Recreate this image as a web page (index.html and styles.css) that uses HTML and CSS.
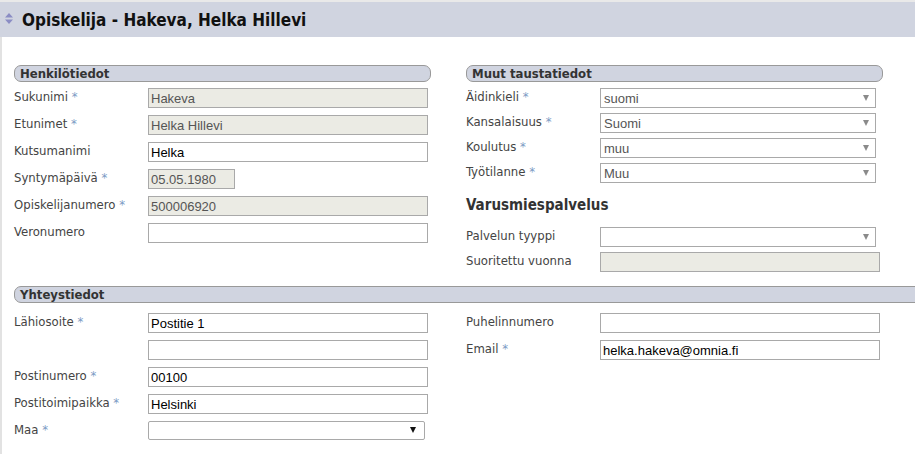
FILE: index.html
```html
<!DOCTYPE html>
<html lang="fi">
<head>
<meta charset="utf-8">
<title>Opiskelija - Hakeva, Helka Hillevi</title>
<link rel="stylesheet" href="styles.css">
</head>
<body>
<div class="titlebar">
  <svg class="sort" width="8" height="11" viewBox="0 0 8 11"><path d="M4 0 L8 4.5 H0 Z M0 6.5 H8 L4 11 Z" fill="#8b8dc4"/></svg>
  <h1>Opiskelija - Hakeva, Helka Hillevi</h1>
</div>
<div class="content">
  <div class="cols">
    <section class="col">
      <div class="sechead">Henkilötiedot</div>
      <div class="form">
        <label class="label">Sukunimi <span class="req">*</span></label>
        <input class="field" value="Hakeva" disabled>
        <label class="label">Etunimet <span class="req">*</span></label>
        <input class="field" value="Helka Hillevi" disabled>
        <label class="label">Kutsumanimi</label>
        <input class="field" value="Helka">
        <label class="label">Syntymäpäivä <span class="req">*</span></label>
        <input class="field short" value="05.05.1980" disabled>
        <label class="label">Opiskelijanumero <span class="req">*</span></label>
        <input class="field" value="500006920" disabled>
        <label class="label">Veronumero</label>
        <input class="field" value="">
      </div>
    </section>
    <section class="col right">
      <div class="sechead">Muut taustatiedot</div>
      <div class="form tight">
        <label class="label">Äidinkieli <span class="req">*</span></label>
        <div class="sel"><select><option>suomi</option></select></div>
        <label class="label">Kansalaisuus <span class="req">*</span></label>
        <div class="sel"><select><option>Suomi</option></select></div>
        <label class="label">Koulutus <span class="req">*</span></label>
        <div class="sel"><select><option>muu</option></select></div>
        <label class="label">Työtilanne <span class="req">*</span></label>
        <div class="sel"><select><option>Muu</option></select></div>
      </div>
      <h2 class="subhead">Varusmiespalvelus</h2>
      <div class="form tight nomargin">
        <label class="label">Palvelun tyyppi</label>
        <div class="sel"><select><option></option></select></div>
        <label class="label">Suoritettu vuonna</label>
        <input class="field" value="" disabled>
      </div>
    </section>
  </div>
  <div class="sechead wide">Yhteystiedot</div>
  <div class="cols bottom">
    <section class="col">
      <div class="form nomargin">
        <label class="label">Lähiosoite <span class="req">*</span></label>
        <input class="field" value="Postitie 1">
        <span class="label"></span>
        <input class="field" value="">
        <label class="label">Postinumero <span class="req">*</span></label>
        <input class="field" value="00100">
        <label class="label">Postitoimipaikka <span class="req">*</span></label>
        <input class="field" value="Helsinki">
        <label class="label">Maa <span class="req">*</span></label>
        <div class="sel native"><select><option></option></select></div>
      </div>
    </section>
    <section class="col right">
      <div class="form nomargin">
        <label class="label">Puhelinnumero</label>
        <input class="field" value="">
        <label class="label">Email <span class="req">*</span></label>
        <input class="field" value="helka.hakeva@omnia.fi">
      </div>
    </section>
  </div>
</div>
</body>
</html>
```

FILE: styles.css
```css
* { box-sizing: border-box; }
html, body { margin: 0; padding: 0; }
body {
  background: #fff;
  font-family: "DejaVu Sans Condensed", "DejaVu Sans", sans-serif;
  font-stretch: condensed;
  font-size: 13px;
  color: #444;
  overflow: hidden;
  border-top: 2px solid #e9e9e9;
}
.titlebar {
  height: 35px;
  background: #d0d4e0;
  display: flex;
  align-items: center;
  padding-left: 5px;
  gap: 9px;
}
.titlebar h1 {
  margin: 0;
  font-size: 17px;
  font-weight: bold;
  color: #111;
  line-height: 20px;
}
.sort { display: block; margin-top: -2px; }
.content {
  border-left: 2px solid #e2e2e2;
  padding: 28px 0 0 12px;
  height: 417px;
}
.cols { display: flex; gap: 35px; }
.col { width: 417px; }
.col.right { width: 417px; }
.sechead {
  height: 17px;
  border: 1px solid #999;
  border-radius: 7px;
  background: #d0d4e0;
  font-weight: bold;
  font-size: 13px;
  color: #333;
  padding-left: 5px;
  line-height: 15px;
}
.sechead.wide {
  margin-top: 14px;
  margin-right: -30px;
  border-radius: 7px 0 0 7px;
}
.form {
  display: grid;
  grid-template-columns: 134px auto;
  row-gap: 7px;
  margin-top: 6px;
  justify-items: start;
}
.form.tight { row-gap: 5px; }
.form.nomargin { margin-top: 0; }
.bottom { margin-top: 10px; }
.label { line-height: 15px; padding-top: 1px; }
.req { color: #7b9bc4; }
.field {
  width: 280px;
  height: 20px;
  border: 1px solid #a9a9a9;
  border-radius: 0;
  padding: 0 2px;
  margin: 0;
  font: 13px "Liberation Sans", Arial, sans-serif;
  color: #000;
  background: #fff;
}
.field:disabled { background: #ebebe4; color: #555; }
.field.short { width: 87px; }
.subhead {
  margin: 14px 0 13px;
  font-size: 15px;
  line-height: 17px;
  font-weight: bold;
  color: #333;
}
.sel { position: relative; width: 276px; height: 20px; }
.sel select {
  appearance: none;
  -webkit-appearance: none;
  width: 100%;
  height: 100%;
  border: 1px solid #a9a9a9;
  border-radius: 0;
  background: #fff;
  padding: 1px 18px 0 3px;
  margin: 0;
  font: 13px "Liberation Sans", Arial, sans-serif;
  color: #555;
}
.sel::after {
  content: "";
  position: absolute;
  right: 7px;
  top: 7px;
  border-left: 3.5px solid transparent;
  border-right: 3.5px solid transparent;
  border-top: 6px solid #8a8a8a;
  pointer-events: none;
}
.sel.native { width: 277px; height: 19px; }
.sel.native select { border-radius: 2px; color: #000; }
.sel.native::after {
  right: 9px;
  top: 6px;
  border-left-width: 3px;
  border-right-width: 3px;
  border-top: 6px solid #111;
}
```
